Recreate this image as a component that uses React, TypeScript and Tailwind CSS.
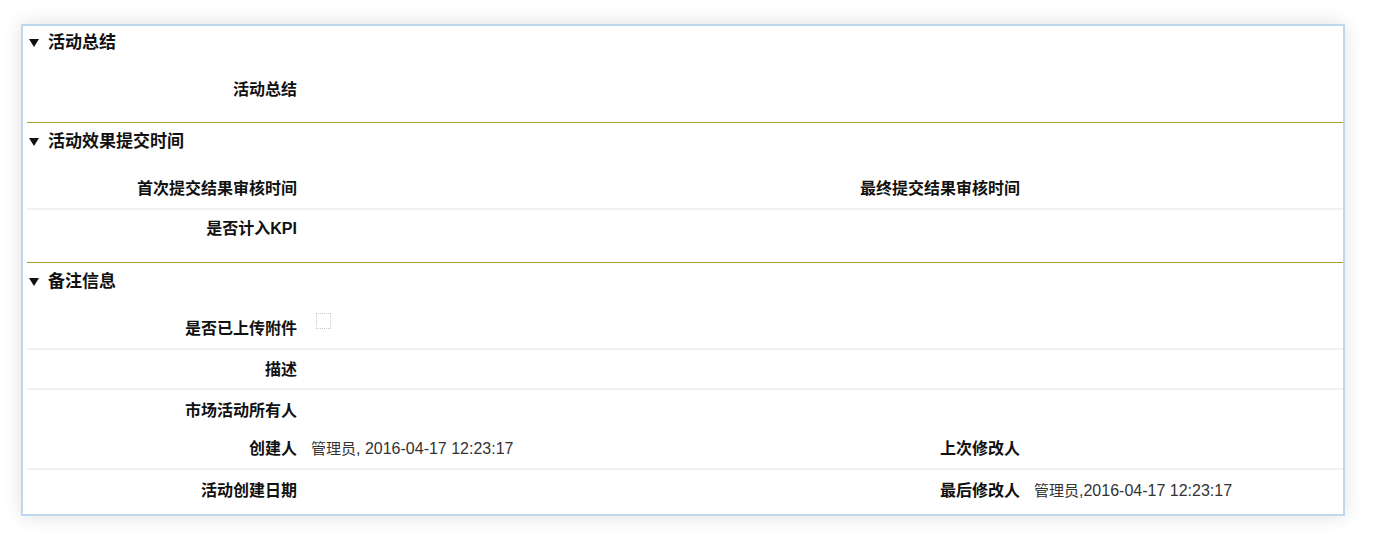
import type { ReactNode } from "react";

const font = "font-['Liberation_Sans','Noto_Sans_CJK_SC',sans-serif]";

function SectionHeader({ title, className }: { title: string; className: string }) {
  return (
    <div className={`flex items-center pl-[2px] ${className}`}>
      <svg width="10" height="8" viewBox="0 0 10 8" className="shrink-0">
        <polygon points="0,0 10,0 5,8" fill="#111" />
      </svg>
      <span className="ml-[9px] text-[17px] leading-5 font-bold text-[#111]">{title}</span>
    </div>
  );
}

function Label({ children }: { children?: ReactNode }) {
  return (
    <div className="pr-[6px] text-right text-[16px] leading-5 font-bold text-[#111] whitespace-nowrap">
      {children}
    </div>
  );
}

function Value({ children }: { children?: ReactNode }) {
  return <div className="pl-[8px] text-[16px] leading-5 text-[#333] whitespace-nowrap">{children}</div>;
}

function Row({ className, children }: { className: string; children: ReactNode }) {
  return (
    <div className={`box-border grid grid-cols-[276px_447px_276px_1fr] items-start ${className}`}>
      {children}
    </div>
  );
}

function Stamp({ sep }: { sep: string }) {
  return (
    <>
      <span className="text-[15px]">管理员</span>
      {sep}2016-04-17 12:23:17
    </>
  );
}

export default function App() {
  return (
    <div className={`min-h-[548px] bg-white pt-[24px] pl-[21px] ${font}`}>
      <div className="box-border w-[1324px] border-2 border-[#bdd7ee] bg-white shadow-[0_0_18px_rgba(0,0,0,0.13)]">
        <div className="pl-[4px]">
          {/* 活动总结 */}
          <div className="border-b border-[#a0a02a]">
            <SectionHeader title="活动总结" className="h-[34px]" />
            <Row className="h-[62px] pt-[20px]">
              <Label>活动总结</Label>
              <Value />
              <div />
              <div />
            </Row>
          </div>

          {/* 活动效果提交时间 */}
          <div className="border-b border-[#a0a02a]">
            <SectionHeader title="活动效果提交时间" className="h-[38px]" />
            <Row className="h-[49px] pt-[18px] border-b-2 border-[#f0f0f0]">
              <Label>首次提交结果审核时间</Label>
              <Value />
              <Label>最终提交结果审核时间</Label>
              <Value />
            </Row>
            <Row className="h-[52px] pt-[9px]">
              <Label>是否计入KPI</Label>
              <Value />
              <div />
              <div />
            </Row>
          </div>

          {/* 备注信息 */}
          <div>
            <SectionHeader title="备注信息" className="h-[38px]" />
            <Row className="h-[49px] pt-[18px] border-b-2 border-[#f0f0f0]">
              <Label>是否已上传附件</Label>
              <Value>
                <span className="ml-[5px] -mt-[6px] block w-[15px] h-[16px] border border-dotted border-[#c8c8c8]" />
              </Value>
              <div />
              <div />
            </Row>
            <Row className="h-[40px] pt-[10px] border-b-2 border-[#f0f0f0]">
              <Label>描述</Label>
              <Value />
              <div />
              <div />
            </Row>
            <Row className="h-[40px] pt-[11px]">
              <Label>市场活动所有人</Label>
              <Value />
              <div />
              <div />
            </Row>
            <Row className="h-[40px] pt-[9px] border-b-2 border-[#f0f0f0]">
              <Label>创建人</Label>
              <Value>
                <Stamp sep=", " />
              </Value>
              <Label>上次修改人</Label>
              <Value />
            </Row>
            <Row className="h-[44px] pt-[11px]">
              <Label>活动创建日期</Label>
              <Value />
              <Label>最后修改人</Label>
              <Value>
                <Stamp sep="," />
              </Value>
            </Row>
          </div>
        </div>
      </div>
    </div>
  );
}
